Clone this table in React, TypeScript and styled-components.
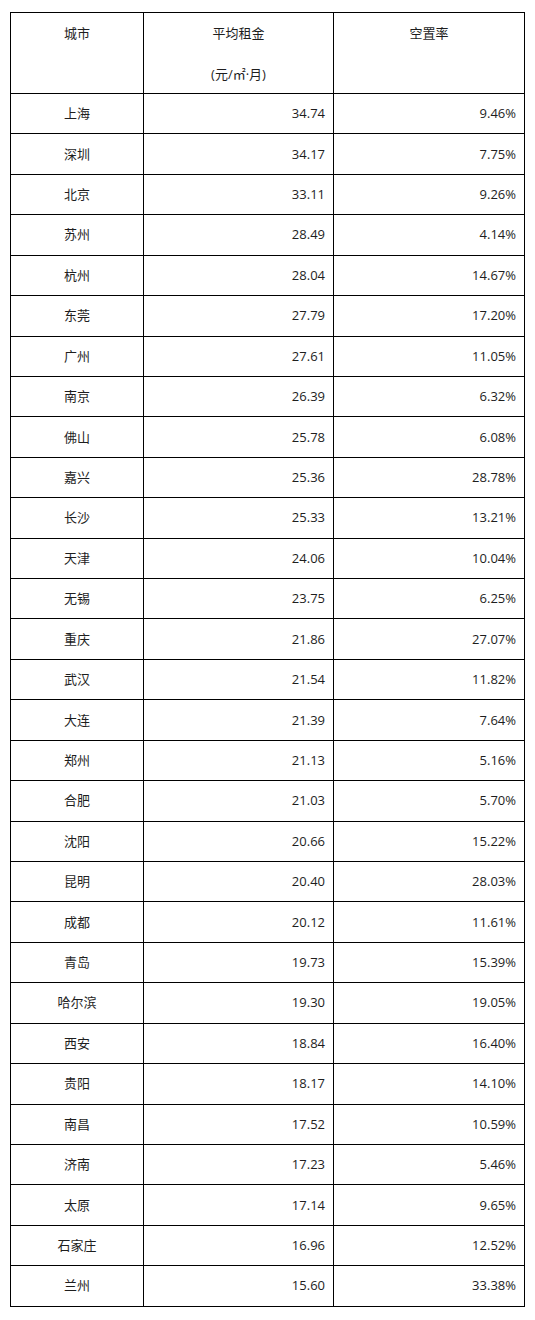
import React from 'react';
import styled, { createGlobalStyle } from 'styled-components';

type Row = { city: string; rent: string; vacancy: string };

const rows: Row[] = [
  { city: '上海', rent: '34.74', vacancy: '9.46%' },
  { city: '深圳', rent: '34.17', vacancy: '7.75%' },
  { city: '北京', rent: '33.11', vacancy: '9.26%' },
  { city: '苏州', rent: '28.49', vacancy: '4.14%' },
  { city: '杭州', rent: '28.04', vacancy: '14.67%' },
  { city: '东莞', rent: '27.79', vacancy: '17.20%' },
  { city: '广州', rent: '27.61', vacancy: '11.05%' },
  { city: '南京', rent: '26.39', vacancy: '6.32%' },
  { city: '佛山', rent: '25.78', vacancy: '6.08%' },
  { city: '嘉兴', rent: '25.36', vacancy: '28.78%' },
  { city: '长沙', rent: '25.33', vacancy: '13.21%' },
  { city: '天津', rent: '24.06', vacancy: '10.04%' },
  { city: '无锡', rent: '23.75', vacancy: '6.25%' },
  { city: '重庆', rent: '21.86', vacancy: '27.07%' },
  { city: '武汉', rent: '21.54', vacancy: '11.82%' },
  { city: '大连', rent: '21.39', vacancy: '7.64%' },
  { city: '郑州', rent: '21.13', vacancy: '5.16%' },
  { city: '合肥', rent: '21.03', vacancy: '5.70%' },
  { city: '沈阳', rent: '20.66', vacancy: '15.22%' },
  { city: '昆明', rent: '20.40', vacancy: '28.03%' },
  { city: '成都', rent: '20.12', vacancy: '11.61%' },
  { city: '青岛', rent: '19.73', vacancy: '15.39%' },
  { city: '哈尔滨', rent: '19.30', vacancy: '19.05%' },
  { city: '西安', rent: '18.84', vacancy: '16.40%' },
  { city: '贵阳', rent: '18.17', vacancy: '14.10%' },
  { city: '南昌', rent: '17.52', vacancy: '10.59%' },
  { city: '济南', rent: '17.23', vacancy: '5.46%' },
  { city: '太原', rent: '17.14', vacancy: '9.65%' },
  { city: '石家庄', rent: '16.96', vacancy: '12.52%' },
  { city: '兰州', rent: '15.60', vacancy: '33.38%' },
];

const App: React.FC = () => {
  return (
    <Page>
      <GlobalStyle />
      <Table>
        <colgroup>
          <col style={{ width: 133 }} />
          <col style={{ width: 190 }} />
          <col style={{ width: 191 }} />
        </colgroup>
        <thead>
          <tr>
            <HeadCell>
              <HeadLine>城市</HeadLine>
            </HeadCell>
            <HeadCell>
              <HeadLine>平均租金</HeadLine>
              <HeadLine>(元/㎡·月)</HeadLine>
            </HeadCell>
            <HeadCell>
              <HeadLine>空置率</HeadLine>
            </HeadCell>
          </tr>
        </thead>
        <tbody>
          {rows.map((r) => (
            <tr key={r.city}>
              <Cell align="center">{r.city}</Cell>
              <Cell align="right">{r.rent}</Cell>
              <Cell align="right">{r.vacancy}</Cell>
            </tr>
          ))}
        </tbody>
      </Table>
    </Page>
  );
};

export default App;

const GlobalStyle = createGlobalStyle`
  body {
    margin: 0;
    background: #ffffff;
    font-family: 'Open Sans', 'Noto Sans CJK SC', sans-serif;
    color: #1e1e1e;
  }
`;

const Page = styled.div`
  padding: 12px 0 0 10px;
  width: 535px;
  box-sizing: border-box;
`;

const Table = styled.table`
  border-collapse: collapse;
  table-layout: fixed;
  width: 515px;
  font-size: 13px;
`;

const HeadCell = styled.th`
  border: 1px solid #000000;
  height: 81px;
  padding: 10px 0 0 0;
  vertical-align: top;
  text-align: center;
  font-weight: normal;
  box-sizing: border-box;
`;

const HeadLine = styled.p`
  margin: 0 0 21px 0;
  line-height: 20px;

  &:last-child {
    margin-bottom: 0;
  }
`;

const Cell = styled.td<{ align: 'center' | 'right' }>`
  border: 1px solid #000000;
  height: 40.43px;
  padding: 0 8px 1px 8px;
  text-align: ${(p) => p.align};
  vertical-align: middle;
  line-height: 20px;
  box-sizing: border-box;
`;
